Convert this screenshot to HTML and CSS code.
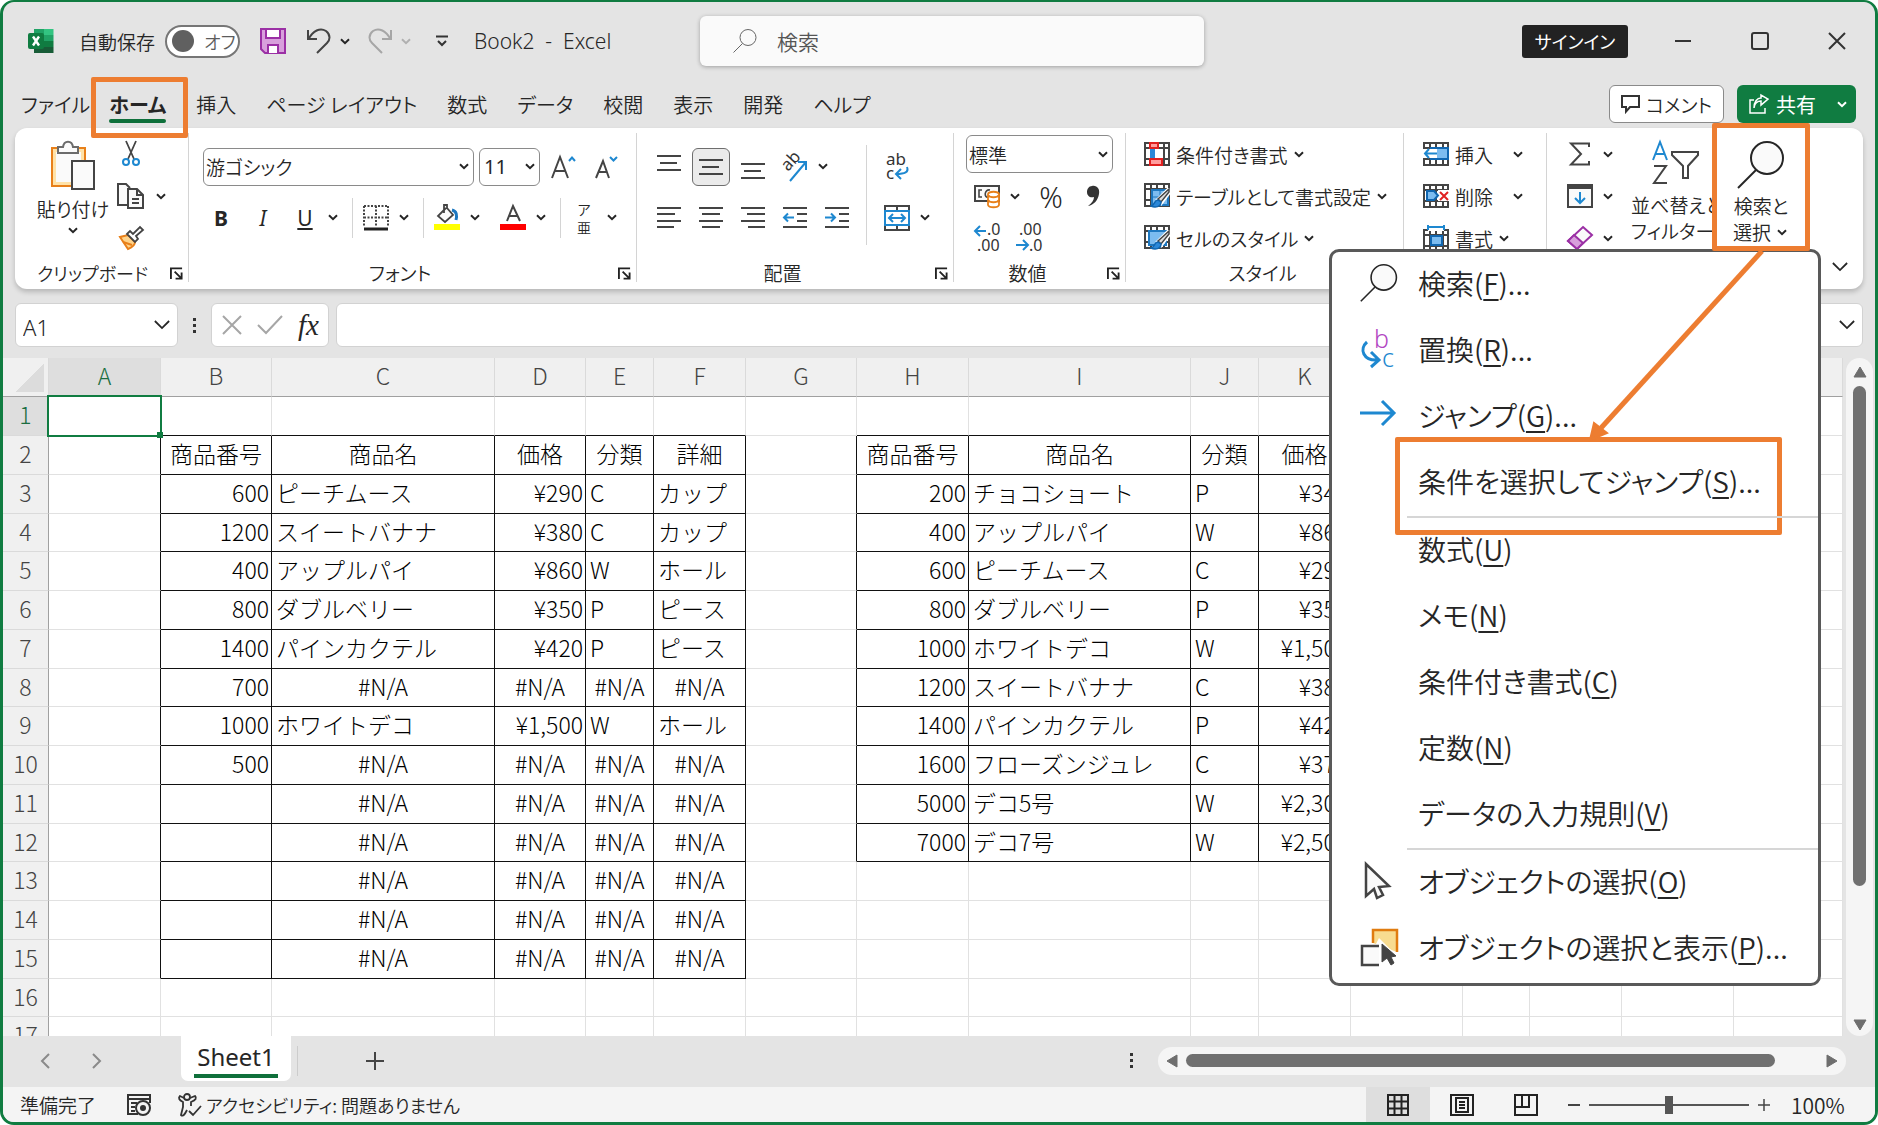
FILE: index.html
```
<!DOCTYPE html>
<html lang="ja">
<head>
    <meta charset="UTF-8">
    <meta name="viewport" content="width=device-width, initial-scale=1.0">
    <title>Book2 - Excel</title>
    <link rel="stylesheet" href="styles.css">
</head>
<body>

<!-- Shared symbols -->
<svg class="sprite" aria-hidden="true">
    <symbol id="chev" viewBox="0 0 10 7"><path d="M1 1.2 5 5.2 9 1.2" fill="none" stroke="currentColor" stroke-width="2"/></symbol>
    <symbol id="chev-big" viewBox="0 0 18 12"><path d="M1 1.5 9 9.5 17 1.5" fill="none" stroke="currentColor" stroke-width="2"/></symbol>
    <symbol id="launch" viewBox="0 0 14 14"><path d="M1 13V1.5H13M5 5l7 7M12.5 6v6.500H6" fill="none" stroke="#222" stroke-width="2"/></symbol>
    <symbol id="lens" viewBox="0 0 48 48"><circle cx="30" cy="17" r="16" fill="#fafafa" stroke="currentColor" stroke-width="2"/><path d="M19 29 1 47" stroke="currentColor" stroke-width="2"/></symbol>
    <symbol id="gridbase" viewBox="0 0 26 24"><path d="M1 1H25V23H1ZM1 6H25M1 17H25M7 1V23M13 1V23M20 1V23" fill="#fff" stroke="#444" stroke-width="2"/></symbol>
    <symbol id="brush" viewBox="0 0 20 20"><path d="M19 1 8 12 11 15 20 3Z" fill="#fff" stroke="#fff" stroke-width="4"/><path d="M19 1 8 11 11 14 19 4Z" fill="#ddd" stroke="#444" stroke-width="1.500"/><path d="M8 12c-4 0-3 5-7 6 4 2 10 1 10-4Z" fill="#2b88d8" stroke="#1066b0" stroke-width="1.500"/></symbol>
</svg>

<div class="window">

    <!-- Title bar -->
    <header class="titlebar">
        <svg class="logo" width="26" height="26" viewBox="0 0 26 26">
            <path d="M6 1h10v24H6z" fill="#185c37"/><path d="M6 1h10v6H6z" fill="#21a366"/><path d="M16 1h9.500v6H16z" fill="#33c481"/><path d="M16 7h9.500v6H16z" fill="#21a366"/><path d="M6 7h10v6H6zM16 13h9.500v6H16z" fill="#107c41"/><path d="M16 19h9.500v6H16z" fill="#185c37"/>
            <rect x="0" y="5" width="16" height="16" rx="2" fill="#107c41"/><path d="M5 8.500 11 17.500M11 8.500 5 17.500" stroke="#fff" stroke-width="2.400"/>
        </svg>
        <span class="autosave-label">自動保存</span>
        <button class="toggle"><span class="knob"></span>オフ</button>
        <button class="bare save" aria-label="保存"><svg width="26" height="26" viewBox="0 0 26 26"><path d="M1 1H25V25H5L1 21Z" fill="#d8a0dc" stroke="#9b30a5" stroke-width="2"/><path d="M6 1H20V10H6ZM8 25V17H18V25" fill="#fff" stroke="#9b30a5" stroke-width="2"/></svg></button>
        <button class="bare undo" aria-label="元に戻す"><svg width="24" height="26" viewBox="0 0 24 26"><path d="M1 2V11H10M1.500 11C6 3 13-1 19 3C24 7 23 12 20 15L10 25" fill="none" stroke="#444" stroke-width="2"/></svg></button>
        <svg class="chev" aria-hidden="true"><use href="#chev"/></svg>
        <button class="bare redo" aria-label="やり直し"><svg width="24" height="26" viewBox="0 0 24 26"><path d="M23 2V11H14M22.500 11C18 3 11-1 5 3C0 7 1 12 4 15L14 25" fill="none" stroke="#a6a6a6" stroke-width="2"/></svg></button>
        <svg class="chev dim" aria-hidden="true"><use href="#chev"/></svg>
        <button class="bare qat" aria-label="カスタマイズ"><svg width="12" height="12" viewBox="0 0 12 12"><path d="M0 1.500H12M2 6 6 10 10 6" fill="none" stroke="#333" stroke-width="2"/></svg></button>
        <h1>Book2&nbsp; -&nbsp; Excel</h1>
        <label class="search">
            <svg width="24" height="24"><use href="#lens"/></svg>
            <input type="text" placeholder="検索">
        </label>
        <button class="signin">サインイン</button>
        <button class="bare winbtn" aria-label="最小化"><svg width="18" height="18" viewBox="0 0 18 18"><path d="M1 9H17" stroke="#333" stroke-width="2"/></svg></button>
        <button class="bare winbtn" aria-label="最大化"><svg width="18" height="18" viewBox="0 0 18 18"><rect x="1" y="1" width="16" height="16" rx="2" fill="none" stroke="#333" stroke-width="2"/></svg></button>
        <button class="bare winbtn" aria-label="閉じる"><svg width="18" height="18" viewBox="0 0 18 18"><path d="M1 1 17 17M17 1 1 17" stroke="#333" stroke-width="2"/></svg></button>
    </header>

    <!-- Ribbon tabs -->
    <nav class="tabs">
        <a href="#">ファイル</a>
        <a href="#" class="active">ホーム</a>
        <a href="#">挿入</a>
        <a href="#">ページ レイアウト</a>
        <a href="#">数式</a>
        <a href="#">データ</a>
        <a href="#">校閲</a>
        <a href="#">表示</a>
        <a href="#">開発</a>
        <a href="#">ヘルプ</a>
        <button class="comment"><svg width="20" height="18" viewBox="0 0 20 18"><path d="M1 1H18V12H9L5 16.500V12H1Z" fill="none" stroke="#333" stroke-width="2"/></svg>コメント</button>
        <button class="share"><svg width="20" height="20" viewBox="0 0 20 20"><path d="M5 6H1V19H16V14M5 14C5 9 9 7 12 7V11L19 5 12 1V4C8 4 5 8 5 14Z" fill="none" stroke="#fff" stroke-width="1.500"/></svg>共有<svg class="chev"><use href="#chev"/></svg></button>
    </nav>

    <!-- Ribbon -->
    <section class="ribbon">

        <div class="group clipboard">
            <div class="cols">
                <button class="big paste">
                    <svg width="46" height="50" viewBox="0 0 46 50"><path d="M2 7H35V45H2Z" fill="#ffe2a8" stroke="#e8801a" stroke-width="2"/><path d="M6 11H31V41H6Z" fill="#fafafa"/><path d="M8 12V6H13C14-1 22-1 23 6H28V12Z" fill="#fafafa" stroke="#6b6b6b" stroke-width="2"/><path d="M22 20H44V48H22Z" fill="#fafafa" stroke="#444" stroke-width="2"/></svg>
                    <span>貼り付け</span>
                    <svg class="chev"><use href="#chev"/></svg>
                </button>
                <div class="stack">
                    <div class="row"><button class="tool" aria-label="切り取り"><svg width="18" height="26" viewBox="0 0 18 26"><path d="M4 0 12 18M14 0 6 18" stroke="#444" stroke-width="1.800"/><circle cx="4" cy="21" r="3" fill="#fff" stroke="#1e88d0" stroke-width="2"/><circle cx="14" cy="21" r="3" fill="#fff" stroke="#1e88d0" stroke-width="2"/></svg></button></div>
                    <div class="row"><button class="tool" aria-label="コピー"><svg width="28" height="28" viewBox="0 0 28 28"><path d="M10 23H1V2H9L13 6" fill="#fafafa" stroke="#444" stroke-width="2"/><path d="M11 7H20L26 13V26H11ZM20 7V13H26M15 17H22M15 21H22" fill="#fafafa" stroke="#444" stroke-width="2"/></svg></button><svg class="chev"><use href="#chev"/></svg></div>
                    <div class="row"><button class="tool" aria-label="書式のコピー"><svg width="26" height="26" viewBox="0 0 26 26"><path d="M2 12 10 24C15 22 17 19 17 17L10 10Z" fill="#ffd38a" stroke="#e8801a" stroke-width="2"/><path d="M5 17 14 20" stroke="#e8801a" stroke-width="2"/><path d="M9 9 12 6 15 9 22 2 25 5 18 11 20 14 17 17Z" fill="#fff" stroke="#444" stroke-width="1.800"/></svg></button></div>
                </div>
            </div>
            <div class="caption"><span>クリップボード</span><svg class="launch"><use href="#launch"/></svg></div>
        </div>

        <div class="group font">
            <div class="two">
                <div class="row line1">
                    <button class="combo fontname">游ゴシック<svg class="chev"><use href="#chev"/></svg></button>
                    <button class="combo fontsize">11<svg class="chev"><use href="#chev"/></svg></button>
                    <button class="tool" aria-label="拡大"><svg width="26" height="24" viewBox="0 0 26 24"><path d="M1 23 9 2 17 23M4 16H14" fill="none" stroke="#444" stroke-width="2"/><path d="M18 6 21 2.500 24 6" fill="none" stroke="#1e88d0" stroke-width="2"/></svg></button>
                    <button class="tool" aria-label="縮小"><svg width="24" height="24" viewBox="0 0 24 24"><path d="M2 23 9 6 15 23M4 17H13" fill="none" stroke="#444" stroke-width="2"/><path d="M16 2 19.500 5.500 23 2" fill="none" stroke="#1e88d0" stroke-width="2"/></svg></button>
                </div>
                <div class="row">
                    <button class="tool"><b>B</b></button>
                    <button class="tool"><i>I</i></button>
                    <button class="tool"><u>U</u></button>
                    <svg class="chev"><use href="#chev"/></svg>
                    <span class="bar"></span>
                    <button class="tool" aria-label="罫線"><svg width="26" height="26" viewBox="0 0 26 26"><path d="M1 1H25M1 12.500H25M1 1V22M13 1V22M25 1V22" stroke="#444" stroke-width="2" stroke-dasharray="2 1.500"/><path d="M1 24H25" stroke="#222" stroke-width="3"/></svg></button>
                    <svg class="chev"><use href="#chev"/></svg>
                    <span class="bar"></span>
                    <button class="tool" aria-label="塗りつぶし"><svg width="26" height="27" viewBox="0 0 26 27"><path d="M12 4 4 12 11 18 19 11 13 4V1H10V9" fill="#fafafa" stroke="#444" stroke-width="1.800"/><path d="M18 6C23 7 23 12 22 16" fill="none" stroke="#1e78c0" stroke-width="3"/><path d="M0 20H26V26H0Z" fill="#ff0"/></svg></button>
                    <svg class="chev"><use href="#chev"/></svg>
                    <button class="tool fontcolor" aria-label="フォントの色"><svg width="26" height="27" viewBox="0 0 26 27"><path d="M7 17 13 2 20 17M9 12H18" fill="none" stroke="#444" stroke-width="2"/><path d="M0 20H26V26H0Z" fill="#f00"/></svg></button>
                    <svg class="chev"><use href="#chev"/></svg>
                    <span class="bar"></span>
                    <button class="tool ruby"><span>ア</span><span>亜</span></button>
                    <svg class="chev"><use href="#chev"/></svg>
                </div>
            </div>
            <div class="caption"><span>フォント</span><svg class="launch"><use href="#launch"/></svg></div>
        </div>

        <div class="group align">
            <div class="cols">
                <div class="two alignleft">
                    <div class="row">
                        <button class="tool" aria-label="上揃え"><svg width="24" height="26" viewBox="0 0 24 26"><path d="M0 2H24M3 9H20M0 16H24" stroke="#444" stroke-width="2"/></svg></button>
                        <button class="tool pressed" aria-label="上下中央揃え"><svg width="24" height="26" viewBox="0 0 24 26"><path d="M0 6H24M3 13H20M0 20H24" stroke="#444" stroke-width="2"/></svg></button>
                        <button class="tool" aria-label="下揃え"><svg width="24" height="26" viewBox="0 0 24 26"><path d="M0 10H24M3 17H20M0 24H24" stroke="#444" stroke-width="2"/></svg></button>
                        <button class="tool" aria-label="方向"><svg width="28" height="28" viewBox="0 0 28 28"><text x="0" y="0" transform="translate(7 19) rotate(-48)" font-size="17" fill="#333">ab</text><path d="M9 28 25 9M17 9H25V17" fill="none" stroke="#1e88d0" stroke-width="2"/></svg></button>
                        <svg class="chev"><use href="#chev"/></svg>
                    </div>
                    <div class="row">
                        <button class="tool" aria-label="左揃え"><svg width="24" height="24" viewBox="0 0 24 24"><path d="M0 2H24M0 8H18M0 15H24M0 21H17" stroke="#444" stroke-width="2"/></svg></button>
                        <button class="tool" aria-label="中央揃え"><svg width="24" height="24" viewBox="0 0 24 24"><path d="M0 2H24M3 8H21M0 15H24M3 21H21" stroke="#444" stroke-width="2"/></svg></button>
                        <button class="tool" aria-label="右揃え"><svg width="24" height="24" viewBox="0 0 24 24"><path d="M0 2H24M6 8H24M0 15H24M7 21H24" stroke="#444" stroke-width="2"/></svg></button>
                        <button class="tool" aria-label="インデント解除"><svg width="24" height="24" viewBox="0 0 24 24"><path d="M0 2H24M14 8H24M14 15H24M0 21H24" stroke="#444" stroke-width="2"/><path d="M11 11.500H1M5 7.500 1 11.500 5 15.500" fill="none" stroke="#1e88d0" stroke-width="2"/></svg></button>
                        <button class="tool" aria-label="インデント"><svg width="24" height="24" viewBox="0 0 24 24"><path d="M0 2H24M14 8H24M14 15H24M0 21H24" stroke="#444" stroke-width="2"/><path d="M0 11.500H10M6 7.500 10 11.500 6 15.500" fill="none" stroke="#1e88d0" stroke-width="2"/></svg></button>
                    </div>
                </div>
                <div class="two">
                    <div class="row"><button class="tool" aria-label="折り返し"><svg width="26" height="28" viewBox="0 0 26 28"><text x="2" y="12" font-size="17" fill="#333">ab</text><text x="2" y="26" font-size="17" fill="#333">c</text><path d="M23 14C25 19 21 21 12 21M17 16 12 21 17 26" fill="none" stroke="#1e88d0" stroke-width="2"/></svg></button></div>
                    <div class="row"><button class="tool" aria-label="結合"><svg width="26" height="26" viewBox="0 0 26 26"><path d="M1 1H25V25H1ZM13 1V6M13 20V25" fill="#fff" stroke="#444" stroke-width="2"/><path d="M1 6H25V20H1Z" fill="#fff" stroke="#1e88d0" stroke-width="2"/><path d="M5 13H21M9 9 5 13 9 17M17 9 21 13 17 17" fill="none" stroke="#1e88d0" stroke-width="2"/></svg></button><svg class="chev"><use href="#chev"/></svg></div>
                </div>
            </div>
            <div class="caption"><span>配置</span><svg class="launch"><use href="#launch"/></svg></div>
        </div>

        <div class="group number">
            <div class="stack">
                <div class="row"><button class="combo format">標準<svg class="chev"><use href="#chev"/></svg></button></div>
                <div class="row">
                    <button class="tool" aria-label="通貨"><svg width="26" height="24" viewBox="0 0 26 24"><path d="M1 2H25V17H1Z" fill="#fafafa" stroke="#444" stroke-width="2"/><path d="M8 6H5V13H8M16 6C10 5 10 14 14 13" fill="none" stroke="#444" stroke-width="1.600"/><path d="M14 10V21C15 24 24 24 25 21V10C24 7 15 7 14 10ZM14 11C16 14 23 14 25 11M14 16C16 19 23 19 25 16" fill="#fff" stroke="#e8801a" stroke-width="1.800"/></svg></button>
                    <svg class="chev"><use href="#chev"/></svg>
                    <button class="tool percent">%</button>
                    <button class="tool" aria-label="桁区切り"><svg width="14" height="22" viewBox="0 0 14 22"><path d="M6 1C11 0 14 4 13 9C12 15 8 20 2 21C6 18 8 15 8 12C4 13 1 11 1 7C1 4 3 1 6 1Z" fill="#333"/></svg></button>
                </div>
                <div class="row">
                    <button class="tool" aria-label="小数点表示を増やす"><svg width="26" height="28" viewBox="0 0 26 28"><text x="13" y="11" font-size="16" fill="#333">.0</text><text x="3" y="27" font-size="16" fill="#333">.00</text><path d="M12 7H1M6 2 1 7 6 12" fill="none" stroke="#1e88d0" stroke-width="2"/></svg></button>
                    <button class="tool" aria-label="小数点表示を減らす"><svg width="26" height="28" viewBox="0 0 26 28"><text x="3" y="11" font-size="16" fill="#333">.00</text><text x="13" y="27" font-size="16" fill="#333">.0</text><path d="M0 21H12M7 16 12 21 7 26" fill="none" stroke="#1e88d0" stroke-width="2"/></svg></button>
                </div>
            </div>
            <div class="caption"><span>数値</span><svg class="launch"><use href="#launch"/></svg></div>
        </div>

        <div class="group styles">
            <div class="stack">
                <button class="row wide"><svg width="26" height="24" viewBox="0 0 26 24"><use href="#gridbase"/><path d="M6 1H14V6H6ZM6 17H18V23H6Z" fill="#ff9d9d" stroke="#e02020" stroke-width="2"/><path d="M6 7H11V16H6Z" fill="#2b88d8"/><path d="M11 7H19V16H11Z" fill="#fff"/></svg>条件付き書式<svg class="chev"><use href="#chev"/></svg></button>
                <button class="row wide"><svg width="26" height="26" viewBox="0 0 26 26"><use href="#gridbase" width="26" height="24"/><path d="M8 7H24V22H8Z" fill="#7cbcf0" stroke="#1e78c0" stroke-width="2"/><path d="M8 14H24M16 7V22" stroke="#1e78c0"/><use href="#brush" x="6" y="5" width="20" height="20"/></svg>テーブルとして書式設定<svg class="chev"><use href="#chev"/></svg></button>
                <button class="row wide"><svg width="26" height="26" viewBox="0 0 26 26"><use href="#gridbase" width="26" height="24"/><path d="M5 6H22V20H5Z" fill="#7cbcf0" stroke="#1e78c0" stroke-width="2"/><use href="#brush" x="6" y="5" width="20" height="20"/></svg>セルのスタイル<svg class="chev"><use href="#chev"/></svg></button>
            </div>
            <div class="caption"><span>スタイル</span></div>
        </div>

        <div class="group cells">
            <div class="stack">
                <button class="row wide"><svg width="26" height="24" viewBox="0 0 26 24"><use href="#gridbase"/><path d="M8 6H25V17H8Z" fill="#7cbcf0" stroke="#1066b0" stroke-width="2"/><path d="M0 7H14V16H0Z" fill="#fff"/><path d="M14 11.500H2M6 7 2 11.500 6 16" fill="none" stroke="#1e88d0" stroke-width="2"/></svg><span>挿入</span><svg class="chev far"><use href="#chev"/></svg></button>
                <button class="row wide"><svg width="26" height="24" viewBox="0 0 26 24"><use href="#gridbase"/><path d="M15 6H26V17H15Z" fill="#fff"/><path d="M4 7H11L15 11.500 11 16H4Z" fill="#7cbcf0" stroke="#1066b0" stroke-width="2"/><path d="M17 8 25 16M25 8 17 16" stroke="#e02020" stroke-width="2"/></svg><span>削除</span><svg class="chev far"><use href="#chev"/></svg></button>
                <button class="row wide"><svg width="26" height="26" viewBox="0 0 26 26"><use href="#gridbase" y="4" width="26" height="24"/><path d="M5 0H21V6H5Z" fill="#fff"/><path d="M8 11H19V20H8Z" fill="#7cbcf0" stroke="#1066b0" stroke-width="2"/><path d="M5 2H21M5 0V5M21 0V5" stroke="#1e88d0" stroke-width="2"/></svg><span>書式</span><svg class="chev"><use href="#chev"/></svg></button>
            </div>
        </div>

        <div class="group edit">
            <div class="cols">
                <div class="stack">
                    <div class="row"><button class="tool" aria-label="合計"><svg width="22" height="24" viewBox="0 0 22 24"><path d="M20 5V1.500H2L12 12 2 22.500H20V19" fill="none" stroke="#444" stroke-width="2"/></svg></button><svg class="chev"><use href="#chev"/></svg></div>
                    <div class="row"><button class="tool" aria-label="フィル"><svg width="26" height="24" viewBox="0 0 26 24"><path d="M1 1H25V23H1Z" fill="#fafafa" stroke="#444" stroke-width="2"/><path d="M1 3H25" stroke="#444" stroke-width="4"/><path d="M13 8V19M8 14 13 19 18 14" fill="none" stroke="#1e88d0" stroke-width="2"/></svg></button><svg class="chev"><use href="#chev"/></svg></div>
                    <div class="row"><button class="tool" aria-label="クリア"><svg width="26" height="24" viewBox="0 0 26 24"><path d="M16 1 25 9 10 23 1 15Z" fill="#fafafa" stroke="#9b30a5" stroke-width="2"/><path d="M7 9 16 17 10 23 1 15Z" fill="#d8a0dc" stroke="#9b30a5" stroke-width="2"/></svg></button><svg class="chev"><use href="#chev"/></svg></div>
                </div>
                <button class="big sort">
                    <svg width="48" height="46" viewBox="0 0 48 46"><path d="M1 20 8 2 15 20M4 14H12" fill="none" stroke="#1e88d0" stroke-width="2"/><path d="M2 26H14L2 43H15M20 12H46V15L36 26V38H31V26L20 15Z" fill="none" stroke="#444" stroke-width="2"/></svg>
                    <span>並べ替えと</span>
                    <span>フィルター<svg class="chev"><use href="#chev"/></svg></span>
                </button>
                <div class="find-wrap">
                    <button class="big find">
                        <svg width="48" height="48"><use href="#lens"/></svg>
                        <span>検索と</span>
                        <span>選択<svg class="chev"><use href="#chev"/></svg></span>
                    </button>

                    <!-- Drop-down menu -->
                    <ul class="menu">
                        <li><a href="#"><svg width="38" height="38" viewBox="0 0 48 48"><use href="#lens"/></svg>検索(<u>F</u>)...</a></li>
                        <li><a href="#"><svg width="38" height="40" viewBox="0 0 38 40"><text x="14" y="19" font-size="25" fill="#b146c2">b</text><text x="22" y="38" font-size="25" fill="#1e88d0">c</text><path d="M7 13C-1 20 3 32 18 31M11 23 19 31 11 38" fill="none" stroke="#1e88d0" stroke-width="3"/></svg>置換(<u>R</u>)...</a></li>
                        <li><a href="#"><svg width="38" height="30" viewBox="0 0 38 30"><path d="M0 13H34M22 1 34 13 22 25" fill="none" stroke="#1e88d0" stroke-width="3"/></svg>ジャンプ(<u>G</u>)...</a></li>
                        <li class="marked"><a href="#">条件を選択してジャンプ(<u>S</u>)...</a></li>
                        <li class="sep"></li>
                        <li><a href="#">数式(<u>U</u>)</a></li>
                        <li><a href="#">メモ(<u>N</u>)</a></li>
                        <li><a href="#">条件付き書式(<u>C</u>)</a></li>
                        <li><a href="#">定数(<u>N</u>)</a></li>
                        <li><a href="#">データの入力規則(<u>V</u>)</a></li>
                        <li class="sep"></li>
                        <li><a href="#"><svg width="38" height="38" viewBox="0 0 38 38"><path d="M6 2V34L14 27 17 36 23 33 19 25 29 24Z" fill="#fafafa" stroke="#444" stroke-width="2.500"/></svg>オブジェクトの選択(<u>O</u>)</a></li>
                        <li><a href="#"><svg width="38" height="38" viewBox="0 0 38 38"><path d="M13 15V2H37V24" fill="#f8dc90" stroke="#e07c10" stroke-width="2.500"/><path d="M19 10 37 28V36H16V16Z" fill="#fff"/><path d="M19 18H2V37H19" fill="#fafafa" stroke="#444" stroke-width="2.500"/><path d="M22 16V34L27 30 31 37 34 35 31 29 36 28Z" fill="#444" stroke="#444"/></svg>オブジェクトの選択と表示(<u>P</u>)...</a></li>
                    </ul>
                    <svg class="arrow" width="180" height="190" viewBox="0 0 180 190"><path d="M175 0 14 177" stroke="#ed7d31" stroke-width="5"/><path d="M3 189 7 172 20 182Z" fill="#ed7d31" stroke="#ed7d31" stroke-width="2"/></svg>
                </div>
            </div>
        </div>
        <button class="bare collapse" aria-label="リボンを折りたたむ"><svg class="chev-big"><use href="#chev-big"/></svg></button>
    </section>

    <!-- Formula bar -->
    <div class="formula">
        <div class="namebox"><input type="text" value="A1" aria-label="名前ボックス"><svg class="chev-big"><use href="#chev-big"/></svg></div>
        <span class="dots"><i></i><i></i><i></i></span>
        <div class="fx">
            <svg width="20" height="20" viewBox="0 0 20 20"><path d="M1 1 19 19M19 1 1 19" stroke="#a6a6a6" stroke-width="2"/></svg>
            <svg width="26" height="20" viewBox="0 0 26 20"><path d="M1 10 9 18 25 1" fill="none" stroke="#a6a6a6" stroke-width="2"/></svg>
            <em>fx</em>
        </div>
        <div class="fbox"><input type="text" aria-label="数式"><svg class="chev-big"><use href="#chev-big"/></svg></div>
    </div>

    <!-- Sheet -->
    <main class="sheet">
        <div class="cells-area">
            <table class="grid">
                <colgroup id="cols"></colgroup>
                <thead><tr id="letters"><th class="corner"></th></tr></thead>
                <tbody id="rows"></tbody>
            </table>
        </div>
        <div class="vscroll">
            <svg width="14" height="12" viewBox="0 0 14 12"><path d="M7 1 13 11H1Z" fill="#6e6e6e" stroke="#6e6e6e"/></svg>
            <span class="thumb"></span>
            <svg class="down" width="14" height="12" viewBox="0 0 14 12"><path d="M1 1H13L7 11Z" fill="#6e6e6e" stroke="#6e6e6e"/></svg>
        </div>
    </main>

    <!-- Sheet tabs -->
    <div class="sheetbar">
        <button class="bare prev" aria-label="前へ"><svg width="10" height="16" viewBox="0 0 10 16"><path d="M9 1 2 8 9 15" fill="none" stroke="#8a8a8a" stroke-width="2"/></svg></button>
        <button class="bare next" aria-label="次へ"><svg width="10" height="16" viewBox="0 0 10 16"><path d="M1 1 8 8 1 15" fill="none" stroke="#8a8a8a" stroke-width="2"/></svg></button>
        <button class="sheettab"><span>Sheet1</span></button>
        <button class="bare add" aria-label="新しいシート"><svg width="18" height="18" viewBox="0 0 18 18"><path d="M9 0V18M0 9H18" stroke="#444" stroke-width="2"/></svg></button>
        <span class="dots"><i></i><i></i><i></i></span>
        <div class="hscroll">
            <svg width="12" height="14" viewBox="0 0 12 14"><path d="M11 1V13L1 7Z" fill="#6e6e6e" stroke="#6e6e6e"/></svg>
            <span class="thumb"></span>
            <svg width="12" height="14" viewBox="0 0 12 14"><path d="M1 1V13L11 7Z" fill="#6e6e6e" stroke="#6e6e6e"/></svg>
        </div>
    </div>

    <!-- Status bar -->
    <footer class="status">
        <span>準備完了</span>
        <svg class="macro" width="24" height="22" viewBox="0 0 24 22"><path d="M11 20H1V1H23V9M1 5H23M4 9H10M4 13H8M4 17H8" fill="none" stroke="#333" stroke-width="2"/><circle cx="16" cy="14" r="7" fill="#f4f4f4" stroke="#333" stroke-width="2"/><circle cx="16" cy="14" r="3" fill="#333"/></svg>
        <svg width="24" height="24" viewBox="0 0 24 24"><circle cx="9" cy="4" r="3" fill="none" stroke="#333" stroke-width="1.800"/><path d="M6 5 2 3C0 5 1 7 5 9V14L3 22C5 24 7 21 9 17M12 5 17 3C19 5 18 7 13 9V13M11 18 15 22 23 13" fill="none" stroke="#333" stroke-width="1.800"/></svg>
        <span class="a11y">アクセシビリティ: 問題ありません</span>
        <button class="view on" aria-label="標準"><svg width="22" height="22" viewBox="0 0 22 22"><path d="M1 1H21V21H1ZM1 7.500H21M1 14.500H21M7.500 1V21M14.500 1V21" fill="none" stroke="#222" stroke-width="2"/></svg></button>
        <button class="view" aria-label="ページ レイアウト"><svg width="24" height="22" viewBox="0 0 24 22"><path d="M1 1H23V21H1ZM6 4H18V18H6ZM9 8H15M9 11H15M9 14H15" fill="none" stroke="#222" stroke-width="2"/></svg></button>
        <button class="view" aria-label="改ページ"><svg width="24" height="22" viewBox="0 0 24 22"><path d="M1 1H23V21H1ZM1 13H15V1M8 1V13" fill="none" stroke="#222" stroke-width="2"/></svg></button>
        <svg class="minus" width="12" height="12" viewBox="0 0 12 12"><path d="M0 6H12" stroke="#444" stroke-width="2"/></svg>
        <input type="range" min="0" max="100" value="50" aria-label="ズーム">
        <svg width="12" height="12" viewBox="0 0 12 12"><path d="M0 6H12M6 0V12" stroke="#444" stroke-width="1.500"/></svg>
        <span class="zoom">100%</span>
    </footer>
</div>

<script>
    // Column widths of the sheet, the last one takes what is left
    const widths = [112, 111, 223, 91, 68, 92, 111, 112, 222, 68, 92, 112, 67, 92, 112, 0];
    const na = '#N/A';

    const left = [
        ['商品番号', '商品名', '価格', '分類', '詳細'],
        [600, 'ピーチムース', '¥290', 'C', 'カップ'],
        [1200, 'スイートバナナ', '¥380', 'C', 'カップ'],
        [400, 'アップルパイ', '¥860', 'W', 'ホール'],
        [800, 'ダブルベリー', '¥350', 'P', 'ピース'],
        [1400, 'パインカクテル', '¥420', 'P', 'ピース'],
        [700, na, na, na, na],
        [1000, 'ホワイトデコ', '¥1,500', 'W', 'ホール'],
        [500, na, na, na, na],
        ['', na, na, na, na],
        ['', na, na, na, na],
        ['', na, na, na, na],
        ['', na, na, na, na],
        ['', na, na, na, na]
    ];
    const right = [
        ['商品番号', '商品名', '分類', '価格'],
        [200, 'チョコショート', 'P', '¥340'],
        [400, 'アップルパイ', 'W', '¥860'],
        [600, 'ピーチムース', 'C', '¥290'],
        [800, 'ダブルベリー', 'P', '¥350'],
        [1000, 'ホワイトデコ', 'W', '¥1,500'],
        [1200, 'スイートバナナ', 'C', '¥380'],
        [1400, 'パインカクテル', 'P', '¥420'],
        [1600, 'フローズンジュレ', 'C', '¥370'],
        [5000, 'デコ5号', 'W', '¥2,300'],
        [7000, 'デコ7号', 'W', '¥2,500']
    ];

    // Returns the value of a cell, or undefined outside both tables
    function value(row, col) {
        const l = left[row - 2], r = right[row - 2];
        if (l && col >= 1 && col <= 5) return l[col - 1];
        if (r && col >= 7 && col <= 10) return r[col - 7];
        return undefined;
    }

    let cols = '<col style="width:46px">';
    widths.forEach((w, i) => {
        cols += w ? `<col style="width:${w}px">` : '<col>';
        document.getElementById('letters').innerHTML += `<th class="${i === 0 ? 'on' : ''}">${String.fromCharCode(65 + i)}</th>`;
    });
    document.getElementById('cols').innerHTML = cols;

    let html = '';
    for (let row = 1; row <= 17; row++) {
        html += `<tr><th class="${row === 1 ? 'on' : ''}">${row}</th>`;
        for (let col = 0; col < widths.length; col++) {
            const v = value(row, col);
            const css = [];
            if (v !== undefined || value(row, col + 1) !== undefined) css.push('r');
            if (v !== undefined || value(row + 1, col) !== undefined) css.push('b');
            if (row === 2 || v === na) css.push('c');
            else if (typeof v === 'number' || String(v).startsWith('¥')) css.push('n');
            if (row === 1 && col === 0) css.push('cursor');
            html += `<td class="${css.join(' ')}">${v === undefined ? '' : v}</td>`;
        }
        html += '</tr>';
    }
    document.getElementById('rows').innerHTML = html;
</script>

</body>
</html>
```
FILE: styles.css
```
*, *::before, *::after {
    box-sizing: border-box;
}
body {
    margin: 0;
    background-color: #ffffff;
    color: #262626;
    font-family: "Noto Sans CJK JP", sans-serif;
    font-size: 19px;
    font-weight: 350;
    font-feature-settings: "palt";
}
button, input {
    font: inherit;
    font-feature-settings: inherit;
    color: inherit;
}
button {
    background: none;
    border: none;
    padding: 0;
    white-space: nowrap;
}
svg {
    flex: none;
    display: block;
    overflow: visible;
}
svg text {
    font-family: "Noto Sans", sans-serif;
}
.sprite {
    position: absolute;
    width: 0;
    height: 0;
}
.window {
    height: 100vh;
    display: flex;
    flex-direction: column;
    background-color: #e4e4e4;
    border: 3px solid #107c41;
    border-top-width: 2px;
    border-radius: 14px;
    overflow: hidden;
}
.chev {
    width: 10px;
    height: 7px;
    margin: 0 2px;
}
.chev-big {
    width: 16px;
    height: 12px;
}
.dim {
    color: #b0b0b0;
}

/* Title bar */
.titlebar {
    display: flex;
    align-items: center;
    height: 78px;
    padding: 0 20px 0 25px;
    flex: none;
}
.autosave-label {
    margin-left: 25px;
}
.toggle {
    display: flex;
    align-items: center;
    gap: 10px;
    width: 75px;
    height: 33px;
    margin: 0 20px 0 10px;
    padding-left: 5px;
    border: 2px solid #767676;
    border-radius: 17px;
    background-color: #ffffff;
    color: #5c5c5c;
    font-size: 18px;
}
.knob {
    width: 22px;
    height: 22px;
    border-radius: 50%;
    background-color: #606060;
}
.undo {
    margin: 0 7px 0 21px;
}
.redo {
    margin: 0 7px 0 16px;
}
.qat {
    margin: 0 26px 0 23px;
}
h1 {
    margin: 0;
    font-family: "Noto Sans", sans-serif;
    font-size: 21px;
    font-weight: 350;
    width: 226px;
}
.search {
    display: flex;
    align-items: center;
    gap: 18px;
    width: 504px;
    height: 50px;
    padding-left: 33px;
    background-color: #fafafa;
    border-radius: 6px;
    box-shadow: 0 1px 4px rgba(0, 0, 0, 0.3);
    color: #666666;
    font-size: 21px;
}
.search input {
    flex: 1;
    min-width: 0;
    border: none;
    background: none;
}
.search input::placeholder {
    color: #555555;
}
.signin {
    width: 106px;
    height: 33px;
    margin-left: auto;
    margin-right: 16px;
    border-radius: 3px;
    background-color: #222222;
    color: #ffffff;
    font-size: 18px;
    font-weight: 400;
}
.winbtn {
    width: 77px;
    height: 33px;
    display: flex;
    align-items: center;
    justify-content: center;
}
.winbtn:last-child {
    width: 36px;
    margin-left: 21px;
}

/* Ribbon tabs */
.tabs {
    display: flex;
    align-items: center;
    height: 48px;
    flex: none;
    padding: 0 19px 0 3px;
    font-size: 20px;
}
.tabs a {
    position: relative;
    padding: 0 15px;
    color: inherit;
    text-decoration: none;
}
.tabs .active {
    margin-left: -11px;
    font-weight: 700;
}
.tabs .active::before {
    content: "";
    position: absolute;
    left: 15px;
    right: 15px;
    bottom: -4px;
    height: 4px;
    border-radius: 2px;
    background-color: #0f703b;
}
.tabs .active::after {
    content: "";
    position: absolute;
    inset: -13px -7px -19px -3px;
    border: 5px solid #ed7d31;
    border-radius: 2px;
    z-index: 2;
}
.comment, .share {
    display: flex;
    align-items: center;
    height: 38px;
    border-radius: 6px;
}
.comment {
    gap: 5px;
    width: 115px;
    margin-left: auto;
    margin-right: 13px;
    justify-content: center;
    background-color: #ffffff;
    border: 1px solid #8a8a8a;
    font-size: 19px;
}
.share {
    gap: 7px;
    width: 119px;
    padding-left: 12px;
    background-color: #107c41;
    color: #ffffff;
    font-weight: 400;
}
.share .chev {
    margin-left: 14px;
}

/* Ribbon */
.ribbon {
    display: flex;
    flex: none;
    height: 161px;
    margin: 0 12px;
    background-color: #ffffff;
    border-radius: 12px;
    box-shadow: 0 3px 5px rgba(0, 0, 0, 0.2);
}
.group {
    display: flex;
    flex-direction: column;
    margin: 5px 0 7px;
    border-right: 1px solid #d4d4d4;
}
.cols {
    display: flex;
}
.stack {
    height: 126px;
}
.two {
    height: 126px;
    padding-top: 8px;
}
.row {
    display: flex;
    align-items: center;
    height: 42px;
}
.two .row {
    height: 51px;
}
.tool {
    display: flex;
    align-items: center;
    justify-content: center;
    width: 42px;
    height: 38px;
    font-family: "Noto Sans", sans-serif;
    font-size: 21px;
    font-weight: 400;
}
.pressed {
    width: 38px;
    margin: 0 2px;
    background-color: #ebebeb;
    border: 1px solid #6e6e6e;
    border-radius: 6px;
}
.bar {
    width: 1px;
    height: 40px;
    margin: 0 2px 0 12px;
    background-color: #d4d4d4;
}
.combo {
    display: flex;
    align-items: center;
    justify-content: space-between;
    height: 38px;
    padding: 0 2px;
    border: 1px solid #8a8a8a;
    border-radius: 6px;
    background-color: #ffffff;
    font-size: 19px;
}
.caption {
    display: flex;
    align-items: center;
    justify-content: center;
    position: relative;
    height: 18px;
    margin-top: 5px;
    padding-right: 36px;
    line-height: 18px;
}
.launch {
    position: absolute;
    right: 5px;
    width: 13px;
    height: 13px;
}
.big {
    display: flex;
    flex-direction: column;
    align-items: center;
    line-height: 26px;
}
.clipboard {
    width: 174px;
}
.clipboard .caption {
    padding-right: 18px;
    font-size: 18px;
}
.paste {
    width: 86px;
    margin: 8px 0 0 15px;
    gap: 5px;
}
.paste span {
    line-height: 26px;
}
.clipboard .stack {
    margin-left: -6px;
}
.clipboard .row .chev {
    margin-left: 4px;
}
.font {
    width: 448px;
    padding-left: 11px;
}
.line1 {
    padding-left: 3px;
}
.fontname {
    width: 271px;
    margin-right: 5px;
}
.fontsize {
    width: 61px;
    margin-right: 3px;
    padding-left: 4px;
    font-family: "Noto Sans", sans-serif;
    font-size: 20px;
    font-weight: 400;
}
.fontcolor {
    margin-left: 10px;
}
.ruby {
    flex-direction: column;
    font-family: "Noto Sans CJK JP", sans-serif;
    font-size: 14px;
    line-height: 18px;
    font-weight: 350;
}
.align {
    width: 317px;
    padding-left: 11px;
}
.align .two + .two {
    padding-left: 9px;
}
.alignleft {
    width: 219px;
    background: linear-gradient(#d4d4d4, #d4d4d4) right 12px / 1px 100px no-repeat;
}
.number {
    width: 172px;
    padding-left: 12px;
}
.format {
    width: 147px;
}
.percent {
    margin-left: 8px;
    font-size: 29px;
    font-weight: 300;
}
.wide {
    gap: 6px;
}
.wide .chev {
    margin: 0;
}
.wide .far {
    margin-left: 14px;
}
.styles {
    width: 278px;
    padding-left: 18px;
}
.styles .caption {
    padding-right: 22px;
}
.cells {
    width: 143px;
    padding-left: 19px;
}
.edit {
    padding-left: 12px;
    border-right: none;
}
.sort {
    width: 97px;
    padding: 7px 0 0 16px;
    align-items: flex-start;
    overflow: hidden;
}
.sort > svg {
    margin: 0 0 6px 21px;
}
.sort span, .find span {
    display: flex;
    align-items: center;
    gap: 4px;
}
.find {
    width: 98px;
    padding-top: 8px;
}
.find > svg {
    margin-bottom: 4px;
}
.find-wrap {
    position: relative;
}
.find-wrap::after {
    content: "";
    position: absolute;
    top: -10px;
    left: 0;
    width: 98px;
    height: 128px;
    border: 5px solid #ed7d31;
    border-radius: 2px;
    z-index: 3;
}
.collapse {
    margin: 0 15px 16px auto;
    align-self: flex-end;
}

/* Drop-down menu */
.menu {
    position: absolute;
    top: 116px;
    right: -11px;
    width: 492px;
    margin: 0;
    padding: 0 0 1px;
    list-style: none;
    background-color: #ffffff;
    border: 3px solid #595959;
    border-radius: 10px;
    font-size: 28px;
    z-index: 1;
}
.menu li {
    position: relative;
}
.menu a {
    display: flex;
    align-items: center;
    height: 66px;
    padding: 0 0 4px 86px;
    color: inherit;
    text-decoration: none;
}
.menu a > svg {
    width: 38px;
    margin-left: -58px;
    margin-right: 20px;
}
.menu u {
    text-underline-offset: 4px;
}
.menu .sep {
    height: 2px;
    margin-left: 75px;
    background-color: #d6d6d6;
}
.menu .marked::after {
    content: "";
    position: absolute;
    top: -13px;
    left: 63px;
    width: 387px;
    height: 98px;
    border: 5px solid #ed7d31;
    border-radius: 2px;
}
.arrow {
    position: absolute;
    top: 118px;
    left: -125px;
    z-index: 2;
}

/* Formula bar */
.formula {
    display: flex;
    align-items: center;
    flex: none;
    height: 44px;
    margin: 14px 12px 11px 12px;
}
.namebox, .fx, .fbox {
    display: flex;
    align-items: center;
    height: 44px;
    background-color: #ffffff;
    border: 1px solid #d2d2d2;
    border-radius: 6px;
}
.namebox {
    width: 163px;
    padding: 0 7px;
}
.formula input {
    flex: 1;
    min-width: 0;
    padding: 3px 0 0;
    border: none;
    background: none;
    font-family: "Noto Sans", sans-serif;
    font-size: 22px;
}
.dots {
    display: flex;
    flex-direction: column;
    gap: 3px;
    margin: 0 15px;
}
.dots i {
    width: 3px;
    height: 3px;
    background-color: #333333;
}
.fx {
    gap: 15px;
    width: 118px;
    padding-left: 10px;
}
.fx em {
    font-family: "Liberation Serif", serif;
    font-size: 29px;
    line-height: 30px;
    font-weight: 400;
}
.fbox {
    flex: 1;
    margin-left: 7px;
    padding-right: 7px;
}

/* Sheet */
.sheet {
    display: flex;
    flex: 1;
    min-height: 0;
}
.cells-area {
    flex: 1;
    min-width: 0;
    overflow: hidden;
    background-color: #ffffff;
}
.grid {
    width: 100%;
    table-layout: fixed;
    border-collapse: separate;
    border-spacing: 0;
    font-size: 23px;
    font-weight: 300;
    font-feature-settings: normal;
}
.grid th {
    padding: 0 0 4px;
    background-color: #f0f0f0;
    color: #444444;
    font-weight: 300;
}
.grid thead th {
    height: 39px;
    border-right: 1px solid #dadada;
    border-bottom: 1px solid #a0a0a0;
    line-height: 30px;
}
.grid tbody th {
    border-right: 1px solid #a0a0a0;
    border-bottom: 1px solid #dadada;
    line-height: 30px;
}
.grid th.on {
    background-color: #dedede;
    color: #1b6e41;
}
.grid .corner {
    background: linear-gradient(135deg, transparent 50%, #dcdcdc 50%) right 4px bottom 4px / 28px 28px no-repeat #f0f0f0;
}
.grid tbody tr {
    height: 39px;
}
.grid tbody tr:nth-child(4n) {
    height: 38px;
}
.grid td {
    padding: 0 2px 4px 4px;
    border-right: 1px solid #e1e1e1;
    border-bottom: 1px solid #e1e1e1;
    color: #000000;
    line-height: 30px;
    white-space: nowrap;
}
.grid td.r {
    border-right-color: #111111;
}
.grid td.b {
    border-bottom-color: #111111;
}
.grid td.c {
    padding: 0 0 4px;
    text-align: center;
}
.grid td.n {
    text-align: right;
}
.grid td.cursor {
    position: relative;
}
.cursor::before {
    content: "";
    position: absolute;
    inset: -2px;
    border: 2px solid #107c41;
}
.cursor::after {
    content: "";
    position: absolute;
    right: -3px;
    bottom: -3px;
    width: 6px;
    height: 6px;
    background-color: #107c41;
}
.vscroll {
    display: flex;
    flex-direction: column;
    align-items: center;
    gap: 8px;
    width: 27px;
    margin: 0 2px 0 3px;
    padding: 8px 0 5px;
    border-radius: 14px;
    background-color: #f5f5f5;
}
.thumb {
    background-color: #707070;
    border-radius: 7px;
}
.vscroll .thumb {
    width: 13px;
    height: 500px;
}
.vscroll .down {
    margin-top: auto;
}

/* Sheet tabs */
.sheetbar {
    display: flex;
    align-items: center;
    flex: none;
    height: 51px;
    padding: 0 29px 2px 37px;
}
.next {
    margin-left: 42px;
}
.sheettab {
    align-self: flex-start;
    width: 110px;
    height: 45px;
    margin-left: 79px;
    background-color: #ffffff;
    border-radius: 0 0 7px 7px;
    font-family: "Noto Sans", sans-serif;
    font-size: 24px;
    font-weight: 400;
}
.sheettab span {
    display: block;
    height: 41px;
    margin: -2px 13px 0;
    line-height: 40px;
    border-bottom: 4px solid #0f703b;
}
.add {
    margin-left: 6px;
    padding-left: 68px;
    border-left: 1px solid #cccccc;
    height: 30px;
}
.sheetbar .dots {
    margin: 0 25px 0 auto;
}
.hscroll {
    display: flex;
    align-items: center;
    gap: 8px;
    width: 688px;
    height: 28px;
    padding: 0 8px;
    border-radius: 14px;
    background-color: #f5f5f5;
}
.hscroll .thumb {
    width: 589px;
    height: 13px;
    margin-right: auto;
}

/* Status bar */
.status {
    display: flex;
    align-items: center;
    flex: none;
    height: 35px;
    padding: 0 30px 0 17px;
    background-color: #f4f4f4;
}
.macro {
    margin: 0 27px 0 31px;
}
.a11y {
    margin-left: 4px;
    margin-right: auto;
    font-size: 18px;
}
.view {
    display: flex;
    align-items: center;
    justify-content: center;
    width: 64px;
    height: 35px;
}
.view.on {
    background-color: #dedede;
}
.minus {
    margin-left: 10px;
}
.status input {
    appearance: none;
    width: 160px;
    height: 20px;
    margin: 0 9px;
    background: linear-gradient(#555555, #555555) center / 100% 2px no-repeat;
}
.status input::-webkit-slider-thumb {
    appearance: none;
    width: 8px;
    height: 18px;
    background-color: #555555;
}
.zoom {
    width: 54px;
    margin-left: 21px;
    font-size: 21px;
}
```
